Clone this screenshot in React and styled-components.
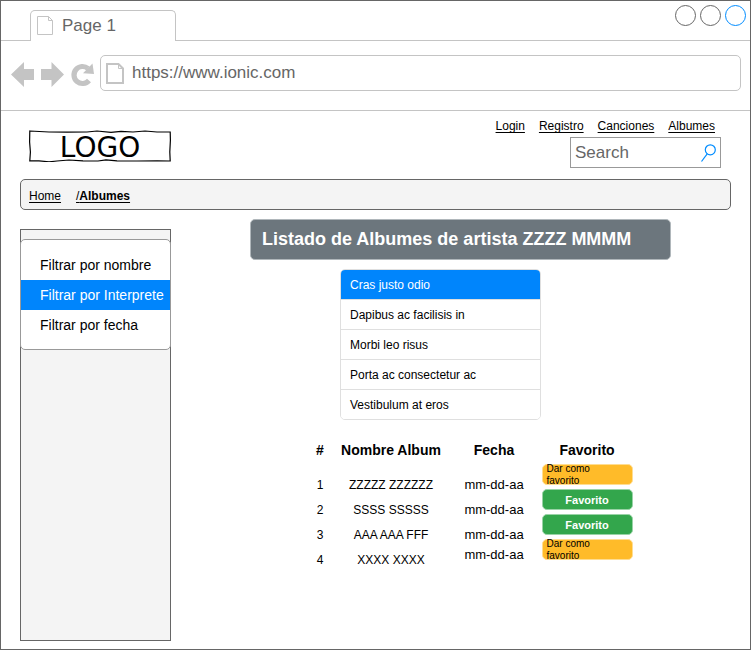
import React from "react";
import styled, { createGlobalStyle } from "styled-components";

const GlobalStyle = createGlobalStyle`
  *, *::before, *::after { box-sizing: border-box; }
  body { margin: 0; background: #fff; }
  body, button, input { font-family: "Liberation Sans", Arial, sans-serif; }
  button { cursor: pointer; }
  svg { display: block; flex: none; }
`;

const Window = styled.div`
  display: flex;
  flex-direction: column;
  min-height: 100vh;
  border: 1px solid #666;
  background: #fff;
  color: #000;
  font-size: 12px;
`;

const TabStrip = styled.div`
  display: flex;
  align-items: flex-end;
  height: 40px;
  padding: 0 4px 0 29px;
  border-bottom: 1px solid #c4c4c4;
`;

const Tab = styled.button`
  display: flex;
  align-items: center;
  gap: 8px;
  width: 146px;
  height: 31px;
  margin-bottom: -1px;
  padding: 0 6px;
  border: 1px solid #c4c4c4;
  border-bottom: 0;
  border-radius: 5px 5px 0 0;
  background: #fff;
  color: #666;
  font-size: 17px;
`;

const WindowButtons = styled.div`
  display: flex;
  align-self: flex-start;
  gap: 4px;
  margin: 4px 0 0 auto;
`;

const RoundButton = styled.button`
  width: 21px;
  height: 21px;
  padding: 0;
  border: 1px solid ${(p) => (p.$active ? "#008cff" : "#666")};
  border-radius: 50%;
  background: #fff;
`;

const Toolbar = styled.div`
  display: flex;
  align-items: flex-start;
  height: 70px;
  padding: 14px 9px 0 10px;
  border-bottom: 1px solid #c4c4c4;
`;

const ToolButtons = styled.div`
  display: flex;
  align-items: center;
  gap: 6px;
  height: 38px;
  margin-right: 5px;
`;

const ToolButton = styled.button`
  padding: 0;
  border: 0;
  background: none;
  color: #c4c4c4;
`;

const AddressBar = styled.label`
  display: flex;
  flex: 1;
  align-items: center;
  gap: 8px;
  height: 36px;
  padding: 0 5px;
  border: 1px solid #c4c4c4;
  border-radius: 5px;
`;

const TextInput = styled.input`
  flex: 1;
  min-width: 0;
  padding: 0;
  border: 0;
  outline: 0;
  background: none;
  color: #666;
  font-size: 17px;
  &::placeholder { color: #666; opacity: 1; }
`;

const Page = styled.div`
  display: flex;
  flex: 1;
  flex-direction: column;
  padding: 0 19px 8px;
`;

const Header = styled.header`
  display: flex;
  align-items: flex-start;
  justify-content: space-between;
  padding: 7px 10px 11px 9px;
`;

const Logo = styled.div`
  display: grid;
  justify-items: center;
  width: 142px;
  margin-top: 12px;
  font: 28px/36px "DejaVu Sans", Verdana, sans-serif;
  > * { grid-area: 1 / 1; }
`;

const HeaderSide = styled.div`
  display: flex;
  flex-direction: column;
  align-items: flex-end;
  gap: 3px;
`;

const Nav = styled.nav`
  display: flex;
  gap: 14px;
  padding-right: 6px;
  line-height: 16px;
`;

const TextLink = styled.a`
  color: inherit;
  text-decoration: underline;
  text-underline-offset: 2px;
`;

const SearchBox = styled.label`
  display: flex;
  align-items: center;
  width: 151px;
  height: 31px;
  padding: 0 4px;
  border: 1px solid #999;
`;

const Breadcrumb = styled.nav`
  display: flex;
  align-items: center;
  gap: 15px;
  height: 31px;
  padding: 2px 8px 0;
  border: 1px solid #666;
  border-radius: 5px;
  background: #f4f4f4;
`;

const Body = styled.div`
  display: flex;
  flex: 1;
  gap: 79px;
`;

const Sidebar = styled.aside`
  flex: none;
  width: 151px;
  margin-top: 19px;
  padding-top: 9px;
  border: 1px solid #666;
  background: #f4f4f4;
`;

const FilterMenu = styled.div`
  display: flex;
  flex-direction: column;
  margin: 0 -1px;
  padding: 10px 0 9px;
  border: 1px solid #999;
  border-radius: 5px;
  background: #fff;
`;

const FilterButton = styled.button`
  height: 30px;
  padding: 0 0 0 19px;
  border: 0;
  background: ${(p) => (p.$active ? "#0085fc" : "#fff")};
  color: ${(p) => (p.$active ? "#fff" : "#000")};
  font-size: 14px;
  text-align: left;
  white-space: nowrap;
`;

const Main = styled.main`
  flex: 1;
  min-width: 0;
  padding: 9px 60px 0 0;
`;

const Title = styled.h1`
  margin: 0 0 9px;
  padding: 0 11px;
  border: 1px solid #b0b7bb;
  border-radius: 5px;
  background: #6c767d;
  color: #fff;
  font-size: 18px;
  line-height: 39px;
`;

const ListGroup = styled.div`
  display: flex;
  flex-direction: column;
  width: 201px;
  margin-left: 90px;
  border: 1px solid #dfdfdf;
  border-radius: 5px;
  overflow: hidden;
`;

const ListItem = styled.button`
  height: 30px;
  padding: 0 9px;
  border: 0;
  border-bottom: 1px solid #dfdfdf;
  background: ${(p) => (p.$active ? "#0085fc" : "#fff")};
  color: ${(p) => (p.$active ? "#fff" : "#000")};
  font-size: 12px;
  text-align: left;
  &:last-child { height: 29px; border-bottom: 0; }
`;

const AlbumTable = styled.table`
  width: 328px;
  margin: 14px 0 0 58px;
  border-spacing: 0;
  table-layout: fixed;
`;

const HeadCell = styled.th`
  width: ${(p) => p.$width}px;
  height: 33px;
  padding: 0 0 2px;
  font-size: 14px;
  white-space: nowrap;
`;

const Cell = styled.td`
  height: 25px;
  padding: 0;
  font-size: ${(p) => p.$size || 12}px;
  line-height: 14px;
  text-align: center;
  vertical-align: ${(p) => p.$align || "bottom"};
  white-space: nowrap;
`;

const FavButton = styled.button`
  display: flex;
  align-items: center;
  justify-content: ${(p) => (p.$done ? "center" : "flex-start")};
  width: 91px;
  height: 21px;
  margin: -10px auto 0;
  padding: 0 4px;
  border: 1px solid ${(p) => (p.$done ? "#99d3a6" : "#ffdd91")};
  border-radius: 5px;
  background: ${(p) => (p.$done ? "#33a64c" : "#ffbb29")};
  color: ${(p) => (p.$done ? "#fff" : "#000")};
  font-size: ${(p) => (p.$done ? 11 : 10)}px;
  font-weight: ${(p) => (p.$done ? 700 : 400)};
  line-height: 12px;
  text-align: left;
`;

const FavLabel = styled.span`
  max-width: 50px;
  white-space: normal;
`;

const TabPageIcon = () => (
  <svg width="17" height="20" viewBox="0 0 17 20" fill="none" stroke="#c4c4c4">
    <path d="M.5 .5h11l4 4v14H.5z" />
    <path d="M11.5 .5v4h4" />
  </svg>
);

const AddressPageIcon = () => (
  <svg width="18" height="21" viewBox="0 0 18 21" fill="none" stroke="#c4c4c4" strokeWidth="2">
    <path d="M1 1h11.5L17 5.5V20H1z" />
    <path d="M12.5 1.5v4H17" strokeWidth="1" />
  </svg>
);

const ArrowIcon = ({ forward }) => (
  <svg width="24" height="26" viewBox="0 0 24 26" fill="currentColor">
    <path d={forward ? "M23 13.5 10.5 1v7H0v11h10.5v7z" : "M0 13.5 13 1v7h10v11H13v7z"} />
  </svg>
);

const ReloadIcon = () => (
  <svg width="24" height="26" viewBox="0 0 24 26">
    <path d="M18 19.5A8.5 8.5 0 1 1 17 7.5" fill="none" stroke="currentColor" strokeWidth="5.2" />
    <path d="M21.5 2.5 23 13l-11-.8z" fill="currentColor" />
  </svg>
);

const SearchIcon = () => (
  <svg width="16" height="20" viewBox="0 0 16 20" fill="none" stroke="#008cff" strokeWidth="1.2">
    <circle cx="10.3" cy="6.8" r="5" />
    <path d="M7.2 10.8 1.5 18.5" />
  </svg>
);

const SketchFrame = () => (
  <svg width="142" height="32" viewBox="0 0 142 32" fill="none" stroke="#000" strokeWidth="1.2">
    <path d="M.8 1 20 2l18 .2L58 2l10-1 14 1.4L92 1.3 104 2l12-1 12 1h13.2l.2 8-.6 12 .4 9-13-.2L108 31l-20-.2-11-.9-8 1.1-15-.2-14-.8-12 1-8 .8-10-.9H.8L1.4 22 .6 12z" />
  </svg>
);

const navLinks = ["Login", "Registro", "Canciones", "Albumes"];
const filters = ["Filtrar por nombre", "Filtrar por Interprete", "Filtrar por fecha"];
const listItems = [
  "Cras justo odio",
  "Dapibus ac facilisis in",
  "Morbi leo risus",
  "Porta ac consectetur ac",
  "Vestibulum at eros",
];
const albums = [
  { id: 1, name: "ZZZZZ ZZZZZZ", favorite: false },
  { id: 2, name: "SSSS SSSSS", favorite: true },
  { id: 3, name: "AAA AAA FFF", favorite: true },
  { id: 4, name: "XXXX XXXX", favorite: false, dateAlign: "middle" },
];

export default function App() {
  return (
    <>
      <GlobalStyle />
      <Window>
        <TabStrip>
          <Tab type="button">
            <TabPageIcon />
            Page 1
          </Tab>
          <WindowButtons>
            <RoundButton type="button" aria-label="Minimize" />
            <RoundButton type="button" aria-label="Maximize" />
            <RoundButton type="button" aria-label="Close" $active />
          </WindowButtons>
        </TabStrip>
        <Toolbar>
          <ToolButtons>
            <ToolButton type="button" aria-label="Back"><ArrowIcon /></ToolButton>
            <ToolButton type="button" aria-label="Forward"><ArrowIcon forward /></ToolButton>
            <ToolButton type="button" aria-label="Reload"><ReloadIcon /></ToolButton>
          </ToolButtons>
          <AddressBar>
            <AddressPageIcon />
            <TextInput aria-label="Address" defaultValue="https://www.ionic.com" />
          </AddressBar>
        </Toolbar>
        <Page>
          <Header>
            <Logo>
              <SketchFrame />
              <span>LOGO</span>
            </Logo>
            <HeaderSide>
              <Nav>
                {navLinks.map((label) => (
                  <TextLink key={label} href="#">{label}</TextLink>
                ))}
              </Nav>
              <SearchBox>
                <TextInput type="text" aria-label="Search" placeholder="Search" />
                <SearchIcon />
              </SearchBox>
            </HeaderSide>
          </Header>
          <Breadcrumb aria-label="Breadcrumb">
            <TextLink href="#">Home</TextLink>
            <TextLink href="#">/<b>Albumes</b></TextLink>
          </Breadcrumb>
          <Body>
            <Sidebar>
              <FilterMenu>
                {filters.map((label, i) => (
                  <FilterButton key={label} type="button" $active={i === 1}>{label}</FilterButton>
                ))}
              </FilterMenu>
            </Sidebar>
            <Main>
              <Title>Listado de Albumes de artista ZZZZ MMMM</Title>
              <ListGroup>
                {listItems.map((label, i) => (
                  <ListItem key={label} type="button" $active={i === 0}>{label}</ListItem>
                ))}
              </ListGroup>
              <AlbumTable>
                <thead>
                  <tr>
                    <HeadCell $width={24}>#</HeadCell>
                    <HeadCell $width={118}>Nombre Album</HeadCell>
                    <HeadCell $width={88}>Fecha</HeadCell>
                    <HeadCell $width={98}>Favorito</HeadCell>
                  </tr>
                </thead>
                <tbody>
                  {albums.map(({ id, name, favorite, dateAlign }) => (
                    <tr key={id}>
                      <Cell>{id}</Cell>
                      <Cell>{name}</Cell>
                      <Cell $size={13} $align={dateAlign}>mm-dd-aa</Cell>
                      <Cell $align="middle">
                        <FavButton type="button" $done={favorite}>
                          <FavLabel>{favorite ? "Favorito" : "Dar como favorito"}</FavLabel>
                        </FavButton>
                      </Cell>
                    </tr>
                  ))}
                </tbody>
              </AlbumTable>
            </Main>
          </Body>
        </Page>
      </Window>
    </>
  );
}
